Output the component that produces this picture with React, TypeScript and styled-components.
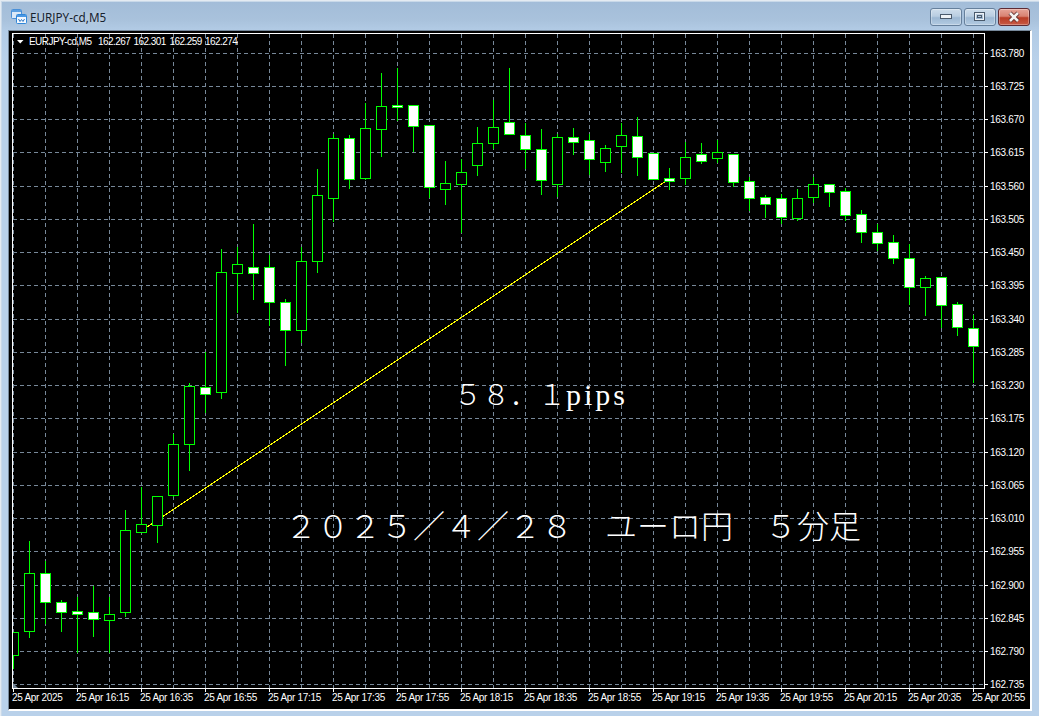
import React from "react";
import styled, { createGlobalStyle } from "styled-components";

const Global = createGlobalStyle`
  html, body { margin: 0; padding: 0; background: #b9d1ea; }
  #root { width: 1039px; height: 716px; overflow: hidden; }
`;

const Window = styled.div`
  box-sizing: border-box;
  width: 1039px;
  height: 716px;
  display: flex;
  flex-direction: column;
  padding: 0 7px 5px 8px;
  background: linear-gradient(180deg, #a2bcd8 0, #a9c2dc 20px, #b2cbe5 30px, #b9d1ea 60px);
  box-shadow: inset 1px 1px 0 #e4ebf2, inset 2px 2px 0 #c9d9e9;
`;

const TitleBar = styled.header`
  box-sizing: border-box;
  height: 30px;
  flex: none;
  display: flex;
  align-items: center;
  padding: 3px 0 0 3px;
  gap: 3px;
`;

const TitleText = styled.span`
  font: 11.7px "Noto Sans", "Open Sans", sans-serif;
  color: #16222e;
  text-shadow: 0 0 6px rgba(255, 255, 255, 0.55);
  padding-top: 1px;
`;

const Controls = styled.div`
  margin-left: auto;
  margin-right: 2px;
  margin-top: 1px;
  display: flex;
  gap: 2px;
  align-items: flex-start;
  height: 18px;
`;

const CtrlButton = styled.button<{ $close?: boolean }>`
  width: 32px;
  height: 18px;
  padding: 0;
  display: flex;
  align-items: center;
  justify-content: center;
  border-radius: 3px;
  border: 1px solid ${(p) => (p.$close ? "#5d2b34" : "#66809c")};
  background: ${(p) =>
    p.$close
      ? "linear-gradient(180deg, #e6a498 0, #d98272 45%, #b93c26 55%, #c85a45 100%)"
      : "linear-gradient(180deg, #cfdeec 0, #b9cde1 45%, #9db8d3 55%, #b3cbe2 100%)"};
  box-shadow: inset 0 0 0 1px rgba(255, 255, 255, 0.3);
`;

const Client = styled.main`
  position: relative;
  flex: 1;
  min-height: 0;
  background: #000;
  border-left: 1px solid #76889a;
  border-top: 1px solid #76889a;
  border-right: 2px solid #fff;
  border-bottom: 2px solid #fff;
  overflow: hidden;
`;

const ChartSvg = styled.svg`
  display: block;
  width: 1021px;
  height: 678px;
`;

const AxisText = styled.text`
  font: 10px "Liberation Sans", Arial, sans-serif;
  letter-spacing: -0.32px;
  fill: #fff;
`;

const HeaderText = styled(AxisText)`
  letter-spacing: -0.55px;
`;

const Annotation = styled.div<{ $x: number; $y: number }>`
  position: absolute;
  left: ${(p) => p.$x - 9}px;
  top: ${(p) => p.$y - 31}px;
  white-space: pre;
  color: #fff;
  font-family: "Liberation Serif", "Noto Sans CJK JP", serif;
  font-weight: 300;
  line-height: 1;
`;

const PriceNote = styled(Annotation)`
  font-size: 28px;
`;

const Pips = styled.span`
  font-size: 30px;
  letter-spacing: 3px;
  margin-left: 0;
`;

const DateNote = styled(Annotation)`
  font-size: 32px;
`;

type Candle = [number, number, number, number, 0 | 1];

// wick top, wick bottom, body top, body bottom, 1 = falling (white) candle
const candles: Candle[] = [
  [632, 669, 632, 655, 0],
  [541, 638, 573, 631, 0],
  [561, 624, 573, 602, 1],
  [600, 632, 602, 612, 1],
  [597, 653, 611, 614, 1],
  [586, 637, 612, 619, 1],
  [597, 653, 614, 620, 0],
  [510, 617, 530, 612, 0],
  [487, 532, 524, 532, 0],
  [496, 543, 496, 525, 0],
  [434, 497, 444, 495, 0],
  [383, 471, 386, 444, 0],
  [352, 413, 387, 394, 1],
  [249, 399, 272, 392, 0],
  [247, 313, 264, 273, 0],
  [224, 300, 267, 273, 1],
  [255, 326, 267, 302, 1],
  [299, 366, 302, 330, 1],
  [247, 343, 261, 330, 0],
  [169, 273, 195, 261, 0],
  [134, 222, 138, 198, 0],
  [135, 189, 138, 179, 1],
  [103, 180, 128, 178, 0],
  [73, 157, 106, 129, 0],
  [68, 121, 105, 107, 1],
  [105, 152, 105, 126, 1],
  [125, 198, 125, 187, 1],
  [161, 205, 183, 189, 0],
  [159, 233, 172, 184, 0],
  [127, 176, 143, 165, 0],
  [100, 149, 127, 143, 0],
  [68, 134, 122, 134, 1],
  [123, 169, 135, 149, 1],
  [129, 195, 149, 180, 1],
  [134, 197, 137, 184, 0],
  [128, 155, 137, 142, 1],
  [134, 175, 140, 159, 1],
  [145, 172, 148, 162, 0],
  [123, 173, 135, 146, 0],
  [117, 176, 136, 157, 1],
  [153, 179, 153, 179, 1],
  [168, 190, 178, 181, 1],
  [142, 185, 157, 178, 0],
  [143, 164, 154, 161, 1],
  [140, 163, 152, 158, 0],
  [154, 187, 154, 182, 1],
  [177, 211, 181, 198, 1],
  [195, 218, 197, 204, 1],
  [194, 224, 198, 217, 1],
  [189, 221, 198, 218, 0],
  [177, 203, 184, 197, 0],
  [184, 207, 184, 192, 1],
  [188, 221, 191, 215, 1],
  [210, 243, 214, 232, 1],
  [224, 251, 232, 243, 1],
  [235, 264, 242, 258, 1],
  [244, 305, 258, 287, 1],
  [276, 316, 278, 287, 0],
  [277, 328, 277, 305, 1],
  [302, 336, 304, 327, 1],
  [315, 383, 328, 346, 1],
];

const gridY = [53, 86, 119, 152, 186, 219, 252, 285, 319, 352, 385, 418, 452, 485, 518, 551, 585, 618, 651, 684];
const prices = gridY.map((_, i) => (163.78 - i * 0.055).toFixed(3));
const gridX = Array.from({ length: 31 }, (_, i) => 13 + i * 32);
const dateTicks = [
  "25 Apr 2025", "25 Apr 16:15", "25 Apr 16:35", "25 Apr 16:55", "25 Apr 17:15", "25 Apr 17:35",
  "25 Apr 17:55", "25 Apr 18:15", "25 Apr 18:35", "25 Apr 18:55", "25 Apr 19:15", "25 Apr 19:35",
  "25 Apr 19:55", "25 Apr 20:15", "25 Apr 20:35", "25 Apr 20:55",
];
const GREEN = "#00ff00";
const GRID = "#778899";

const WindowIcon = () => (
  <svg width="16" height="16" viewBox="0 0 16 16">
    <rect x="0.5" y="0.5" width="10" height="9" rx="1" fill="#dbe9f7" stroke="#4a90d8" />
    <rect x="1" y="1" width="9" height="2" fill="#5b9fe0" />
    <rect x="5.5" y="5.5" width="10" height="9" rx="1" fill="#f4f9ff" stroke="#2f86d8" />
    <rect x="6" y="6" width="9" height="2" fill="#4a98e4" />
    <path d="M7.5 10l1.5 2.5 1.5-2 1.5 2 1.5-2.5" fill="none" stroke="#2f78c4" />
  </svg>
);

const MinGlyph = () => (
  <svg width="14" height="6" viewBox="0 0 14 6">
    <rect x="1.5" y="0.5" width="11" height="4" fill="#eef2f6" stroke="#4a5a6c" />
  </svg>
);
const MaxGlyph = () => (
  <svg width="14" height="10" viewBox="0 0 14 10">
    <rect x="1.5" y="0.5" width="10" height="8" fill="none" stroke="#4a5a6c" />
    <rect x="2.5" y="1.5" width="8" height="6" fill="none" stroke="#eef2f6" />
    <rect x="4.5" y="3.5" width="4" height="2" fill="none" stroke="#4a5a6c" />
  </svg>
);
const CloseGlyph = () => (
  <svg width="14" height="12" viewBox="0 0 14 12">
    <path d="M3 2l8 8M11 2l-8 8" stroke="#5a2a28" strokeWidth="4.2" />
    <path d="M3 2l8 8M11 2l-8 8" stroke="#f4f2f0" strokeWidth="2.6" />
  </svg>
);

export default function App() {
  return (
    <Window>
      <Global />
      <TitleBar>
        <WindowIcon />
        <TitleText>EURJPY-cd,M5</TitleText>
        <Controls>
          <CtrlButton><MinGlyph /></CtrlButton>
          <CtrlButton><MaxGlyph /></CtrlButton>
          <CtrlButton $close><CloseGlyph /></CtrlButton>
        </Controls>
      </TitleBar>
      <Client>
        <ChartSvg viewBox="9 31 1021 678">
          <defs>
            <clipPath id="plot">
              <rect x="13" y="34" width="971" height="654" />
            </clipPath>
          </defs>
          <g stroke={GRID} strokeDasharray="4 3" shapeRendering="crispEdges">
            {gridY.map((y) => (
              <line key={y} x1="13" x2="984" y1={y + 0.5} y2={y + 0.5} />
            ))}
            {gridX.map((x) => (
              <line key={x} x1={x + 0.5} x2={x + 0.5} y1="34" y2="688" />
            ))}
          </g>
          <line x1="141" y1="531" x2="669" y2="179" stroke="#ffff00" shapeRendering="crispEdges" />
          <g clipPath="url(#plot)" shapeRendering="crispEdges">
            {candles.map(([wt, wb, bt, bb, bear], i) => {
              const c = 13 + i * 16;
              return (
                <g key={c}>
                  <line x1={c + 0.5} x2={c + 0.5} y1={wt} y2={wb} stroke={GREEN} />
                  <rect x={c - 4.5} y={bt + 0.5} width="10" height={bb - bt} fill={bear ? "#fff" : "#000"} stroke={GREEN} />
                </g>
              );
            })}
          </g>
          <polygon points="13,683 13,688 18,688" fill={GRID} />
          <rect x="12.5" y="33.5" width="972" height="655" fill="none" stroke="#fff" shapeRendering="crispEdges" />
          <g stroke="#fff" shapeRendering="crispEdges">
            {gridY.map((y) => (
              <line key={y} x1="985" x2="988" y1={y + 0.5} y2={y + 0.5} />
            ))}
            {dateTicks.map((_, i) => (
              <line key={i} x1={13 + i * 64 + 0.5} x2={13 + i * 64 + 0.5} y1="689" y2="692" />
            ))}
          </g>
          {gridY.map((y, i) => (
            <AxisText key={y} x="990" y={y + 4}>{prices[i]}</AxisText>
          ))}
          {dateTicks.map((t, i) => (
            <AxisText key={t} x={12 + i * 64} y="701">{t}</AxisText>
          ))}
          <polygon points="17,40 23.5,40 20.2,43.5" fill="#fff" />
          <HeaderText x="29" y="45">EURJPY-cd,M5</HeaderText>
          <HeaderText x="98" y="45">162.267</HeaderText>
          <HeaderText x="133.5" y="45">162.301</HeaderText>
          <HeaderText x="169.5" y="45">162.259</HeaderText>
          <HeaderText x="205" y="45">162.274</HeaderText>
        </ChartSvg>
        <PriceNote $x={454} $y={380}>５８．１<Pips>pips</Pips></PriceNote>
        <DateNote $x={285} $y={511}>２０２５／４／２８　ユーロ円　５分足</DateNote>
      </Client>
    </Window>
  );
}
